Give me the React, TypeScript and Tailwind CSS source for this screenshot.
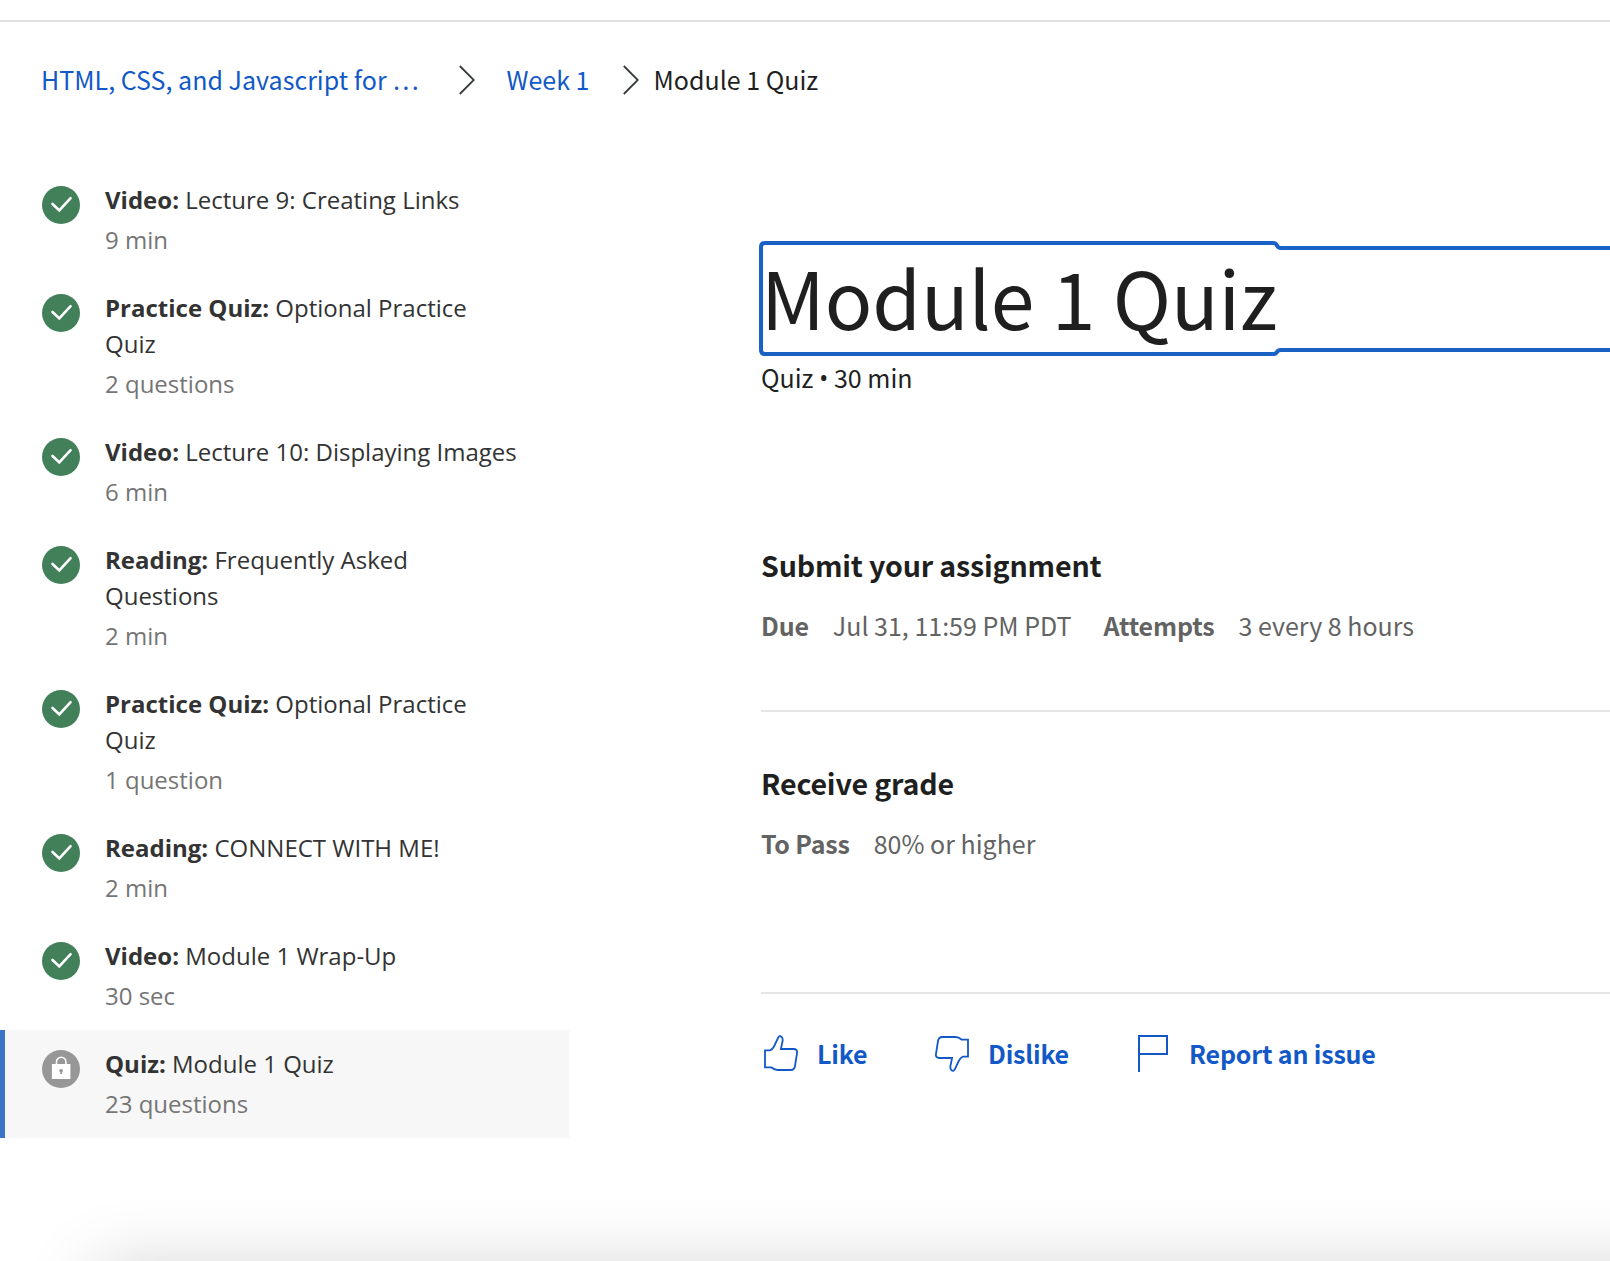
import type { ReactNode } from "react";

type Item = { kind: string; title: string; meta: string; locked?: boolean };

const items: Item[] = [
  { kind: "Video:", title: "Lecture 9: Creating Links", meta: "9 min" },
  { kind: "Practice Quiz:", title: "Optional Practice Quiz", meta: "2 questions" },
  { kind: "Video:", title: "Lecture 10: Displaying Images", meta: "6 min" },
  { kind: "Reading:", title: "Frequently Asked Questions", meta: "2 min" },
  { kind: "Practice Quiz:", title: "Optional Practice Quiz", meta: "1 question" },
  { kind: "Reading:", title: "CONNECT WITH ME!", meta: "2 min" },
  { kind: "Video:", title: "Module 1 Wrap-Up", meta: "30 sec" },
  { kind: "Quiz:", title: "Module 1 Quiz", meta: "23 questions", locked: true },
];

function CheckIcon() {
  return (
    <svg className="mt-1 size-[38px] shrink-0" viewBox="0 0 38 38" fill="none">
      <circle cx="19" cy="19" r="19" fill="#42805a" />
      <path d="M10.5 18 17.3 24.5 28.6 12.2" stroke="#fff" strokeWidth="2.6" strokeLinecap="round" />
    </svg>
  );
}

function LockIcon() {
  return (
    <svg className="mt-1 size-[38px] shrink-0" viewBox="0 0 38 38" fill="none">
      <circle cx="19" cy="19" r="19" fill="#979797" />
      <path d="M14.5 15v-3a4.7 4.7 0 0 1 9.4 0V15" stroke="#fff" strokeWidth="1.6" />
      <path d="M9.900 14h18.500v15H9.900z" fill="#fff" />
      <path d="M19.100 19a1.700 1.700 0 0 1 .9 3.200V24h-1.800v-1.800a1.700 1.700 0 0 1 .9-3.200z" fill="#979797" />
    </svg>
  );
}

function Chevron() {
  return (
    <svg className="h-[30px] w-4 shrink-0" viewBox="0 0 16 30" fill="none">
      <path d="M.8 1 14.8 15 .8 29" stroke="#373a3c" strokeWidth="1.8" />
    </svg>
  );
}

function Thumb({ className }: { className?: string }) {
  return (
    <svg className={className} viewBox="0 -1 34 38" fill="none" stroke="#1259c7" strokeWidth="1.8">
      <path d="M1 15.300H6C8 14.800 9 13.300 10 11.500L14.300 2.500C15 .8 16.500.7 17.600 1.800C18.800 3 18.900 4.500 18.500 6.500L16.900 14H29.500C32.300 14 33.500 15.500 33 18.200L31 31C30.500 33.800 29.200 35 26.800 35H13.500C10.800 35 9 33.800 7.200 32.300H1Z" />
    </svg>
  );
}

function Flag() {
  return (
    <svg className="h-[37px] w-[30px] self-end" viewBox="0 0 30 37" fill="none" stroke="#1259c7" strokeWidth="2">
      <path d="M1 37V1h28v18H1" />
    </svg>
  );
}

function Action({ icon, label, className }: { icon: ReactNode; label: string; className: string }) {
  return (
    <button className={className}>
      {icon}
      <span className="leading-9 font-bold tracking-[-0.18px]">{label}</span>
    </button>
  );
}

export default function App() {
  return (
    <div className="relative h-[1261px] w-[1610px] overflow-hidden bg-white font-['Noto_Sans_CJK_SC',sans-serif] text-[25px] text-[#1f1f1f]">
      <header className="h-[22px] border-b-2 border-[#e1e1e1]" />
      <nav className="flex h-[116px] items-center pl-[41px] leading-9">
        <a className="w-[418px] pb-0.5 tracking-[0.02px] text-[#1259c7]">HTML, CSS, and Javascript for …</a>
        <Chevron />
        <a className="ml-[31.5px] w-[116.5px] pb-0.5 text-[#1259c7]">Week 1</a>
        <Chevron />
        <span className="ml-[14.5px] pb-0.5">Module 1 Quiz</span>
      </nav>
      <div className="flex pt-7">
        <aside className="w-[569px] shrink-0 font-['Open_Sans',sans-serif] text-[24px] leading-9 text-[#333]">
          {items.map((item, i) => (
            <div
              key={i}
              className={
                item.locked
                  ? "flex gap-[25px] border-l-[5px] border-[#3974c6] bg-[#f7f7f7] py-4 pr-12 pl-[37px]"
                  : "flex gap-[25px] py-4 pr-12 pl-[42px]"
              }
            >
              {item.locked ? <LockIcon /> : <CheckIcon />}
              <div className="min-w-0">
                <p>
                  <span className="font-bold">{item.kind}</span> {item.title}
                </p>
                <p className="mt-1 text-[#757575]">{item.meta}</p>
              </div>
            </div>
          ))}
        </aside>
        <main className="ml-[192px] flex-1 whitespace-nowrap">
          <div className="relative mt-[79px] h-[106px]">
            <svg className="absolute -top-1 -left-0.5 h-[116px] w-[860px]" viewBox="0 0 860 116" fill="none">
              <path
                d="M860 7H522c-6 0-2-5-8-5H6q-4 0-4 4V109q0 4 4 4H514c6 0 2-4 8-4H860"
                stroke="#1a61c6"
                strokeWidth="4"
              />
            </svg>
            <h1 className="relative -top-0.5 text-[78.7px] leading-[106px] tracking-[-0.15px]">Module 1 Quiz</h1>
          </div>
          <p className="mt-[8px] flex leading-9">
            Quiz<span className="mx-[5.5px] font-['Open_Sans',sans-serif]">•</span>30 min
          </p>
          <section className="mt-[150px]">
            <h2 className="text-[28.6px] leading-10 font-bold tracking-[-0.18px]">Submit your assignment</h2>
            <p className="mt-[22px] flex leading-9 text-[#636363]">
              <b className="tracking-[-0.15px]">Due</b>
              <span className="ml-6">Jul 31, 11:59 PM PDT</span>
              <b className="ml-8 tracking-[-0.15px]">Attempts</b>
              <span className="ml-6">3 every 8 hours</span>
            </p>
          </section>
          <section className="mt-[67px] border-t-2 border-[#e5e5e5] pt-[51px]">
            <h2 className="text-[28.6px] leading-10 font-bold tracking-[-0.18px]">Receive grade</h2>
            <p className="mt-[22px] flex leading-9 text-[#636363]">
              <b className="tracking-[-0.2px]">To Pass</b>
              <span className="ml-6">80% or higher</span>
            </p>
          </section>
          <footer className="mt-[131px] flex border-t-2 border-[#e5e5e5] pt-[40px] text-[#1259c7]">
            <Action
              className="flex w-[171px] items-center gap-[19px] pl-[3px]"
              icon={<Thumb className="h-[38px] w-[34px]" />}
              label="Like"
            />
            <Action
              className="flex w-[206px] items-center gap-[19px] pl-[3px]"
              icon={<Thumb className="h-[38px] w-[34px] translate-y-px rotate-180" />}
              label="Dislike"
            />
            <Action className="flex items-center gap-[21px]" icon={<Flag />} label="Report an issue" />
          </footer>
        </main>
      </div>
      <div className="absolute top-[1271px] right-[-100px] left-[95px] h-20 shadow-[0_0_75px_rgba(0,0,0,0.2)]" />
    </div>
  );
}
